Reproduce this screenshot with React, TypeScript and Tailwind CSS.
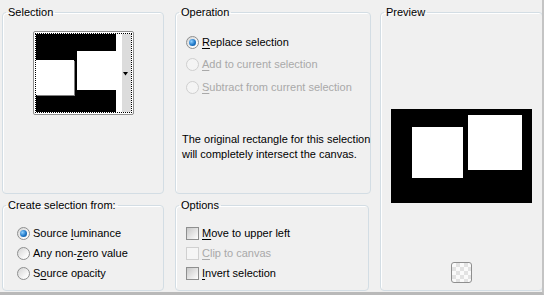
import React from "react";

const font = { fontFamily: '"Liberation Sans", Arial, sans-serif' };

function Radio({ checked, disabled }: { checked?: boolean; disabled?: boolean }) {
  return (
    <span
      className={
        "relative inline-flex h-[13px] w-[13px] shrink-0 items-center justify-center rounded-full border " +
        (disabled
          ? "border-[#cfcfcf] bg-[#f4f4f4]"
          : "border-[#8e8f8f] bg-[linear-gradient(135deg,#d4d4d4,#f8f8f8_70%,#ffffff)]")
      }
    >
      {checked && (
        <span className="h-[7px] w-[7px] rounded-full bg-[radial-gradient(circle_at_35%_35%,#8fd0ff,#1f78c8_55%,#0b4d8f)]" />
      )}
    </span>
  );
}

function Check({ disabled }: { disabled?: boolean }) {
  return (
    <span
      className={
        "inline-block h-[13px] w-[13px] shrink-0 border " +
        (disabled
          ? "border-[#d0d0d0] bg-[#f5f5f5]"
          : "border-[#8e8f8f] bg-[linear-gradient(135deg,#c8c8c8,#e8e8e8_60%,#ffffff)]")
      }
    />
  );
}

function U({ children }: { children: React.ReactNode }) {
  return <span className="underline underline-offset-[2px]">{children}</span>;
}

function Row({
  children,
  disabled,
  h,
  control,
}: {
  children: React.ReactNode;
  disabled?: boolean;
  h: string;
  control: React.ReactNode;
}) {
  return (
    <div className={"flex items-center gap-[3px] whitespace-nowrap " + h}>
      {control}
      <span className={disabled ? "text-[#a9a9a9]" : "text-black"}>{children}</span>
    </div>
  );
}

function Group({
  title,
  className,
  children,
}: {
  title: string;
  className?: string;
  children?: React.ReactNode;
}) {
  return (
    <fieldset
      className={
        "rounded-[4px] border border-[#d3dde4] shadow-[inset_1px_1px_0_#ffffff] " + (className ?? "")
      }
    >
      <legend className="ml-[3px] px-[2px] text-[11px] leading-[13px] text-black">{title}</legend>
      {children}
    </fieldset>
  );
}

export default function App() {
  return (
    <div
      className="h-[295px] w-[544px] overflow-hidden border-b-[3px] border-r-[2px] border-b-[#b9b9b9] border-r-[#c4c4c4] bg-[#f0f0f0] text-[11px] leading-[13px]"
      style={font}
    >
      <div className="grid grid-cols-[162px_194px_163px] gap-x-[11px] pl-[2px] pt-[6px]">
        <div className="flex flex-col gap-[5px]">
          <Group title="Selection" className="h-[188px]">
            <div className="mt-[12px] flex justify-center">
              <div className="flex h-[84px] w-[101px] rounded-[2px] border border-[#8f8f8f] bg-white p-[1px]">
                <div className="flex flex-1 border border-dotted border-black">
                  <div className="flex w-[80px] flex-col bg-black">
                    <div className="relative h-full">
                      <div className="absolute left-[0px] top-[26px] h-[35px] w-[38px] bg-white shadow-[1px_1px_0_#808080]" />
                      <div className="absolute left-[41px] top-[17px] h-[39px] w-[39px] bg-white" />
                    </div>
                  </div>
                  <div className="w-[6px] bg-white" />
                  <div className="relative flex-1 bg-[#dcdcdc]">
                    <svg className="absolute left-[1px] top-[38px]" width="5" height="4" viewBox="0 0 5 4">
                      <path d="M0 0H5L2.5 3.5Z" fill="#000" />
                    </svg>
                  </div>
                </div>
              </div>
            </div>
          </Group>
          <Group title="Create selection from:" className="h-[92px]">
            <div className="mt-[11px] pl-[14px]">
              <Row h="h-[20px]" control={<Radio checked />}>
                Source <U>l</U>uminance
              </Row>
              <Row h="h-[20px]" control={<Radio />}>
                Any non-<U>z</U>ero value
              </Row>
              <Row h="h-[20px]" control={<Radio />}>
                S<U>o</U>urce opacity
              </Row>
            </div>
          </Group>
        </div>
        <div className="flex flex-col gap-[5px]">
          <Group title="Operation" className="h-[188px]">
            <div className="mt-[12px] pl-[10px]">
              <Row h="h-[22px]" control={<Radio checked />}>
                <U>R</U>eplace selection
              </Row>
              <Row h="h-[23px]" disabled control={<Radio disabled />}>
                <U>A</U>dd to current selection
              </Row>
              <Row h="h-[22px]" disabled control={<Radio disabled />}>
                <U>S</U>ubtract from current selection
              </Row>
            </div>
            <p className="mt-[34px] whitespace-nowrap pl-[6px] leading-[15px] text-black">
              The original rectangle for this selection
              <br />
              will completely intersect the canvas.
            </p>
          </Group>
          <Group title="Options" className="h-[92px]">
            <div className="mt-[11px] pl-[10px]">
              <Row h="h-[20px]" control={<Check />}>
                <U>M</U>ove to upper left
              </Row>
              <Row h="h-[20px]" disabled control={<Check disabled />}>
                <U>C</U>lip to canvas
              </Row>
              <Row h="h-[20px]" control={<Check />}>
                <U>I</U>nvert selection
              </Row>
            </div>
          </Group>
        </div>
        <Group title="Preview" className="flex h-[285px] flex-col items-center">
          <div className="mt-[90px] flex h-[94px] w-[141px] items-start bg-black pl-[21px] pt-[6px]">
            <div className="mt-[12px] h-[51px] w-[51px] bg-white" />
            <div className="ml-[5px] h-[55px] w-[54px] bg-white" />
          </div>
          <div className="mt-[59px] h-[21px] w-[21px] rounded-[3px] border border-[#8f8f8f] bg-[repeating-conic-gradient(#e2e2e2_0_25%,#fafafa_0_50%)] bg-[length:8px_8px]" />
        </Group>
      </div>
    </div>
  );
}
